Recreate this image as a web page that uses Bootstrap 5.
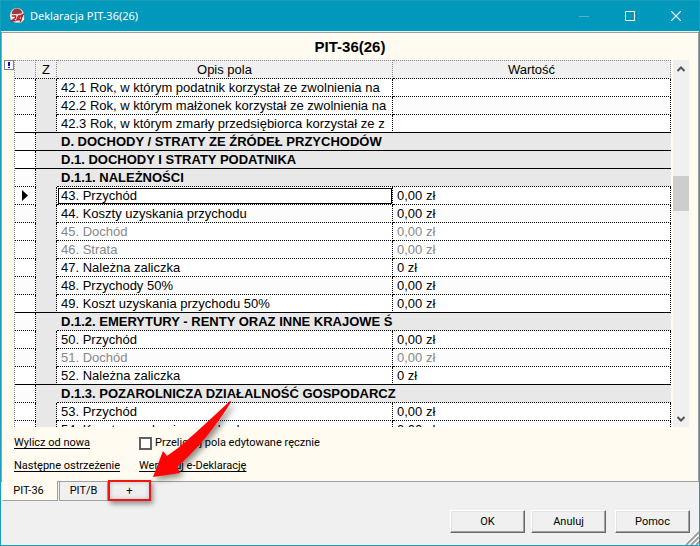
<!DOCTYPE html>
<html lang="pl">
<head>
<meta charset="utf-8">
<meta name="viewport" content="width=device-width, initial-scale=1">
<title>Deklaracja PIT-36(26)</title>
<link href="https://cdn.jsdelivr.net/npm/bootstrap@5.3.0/dist/css/bootstrap.min.css" rel="stylesheet">
<style>
  body { font: 11px/16px Roboto, "Noto Sans", sans-serif; color: #000; background: #f0f0f0; }
  .app-window { border: 1px solid #1a9ebe; }
  .titlebar { background: #0099bc; height: 30px; color: #fff; font: 11px/16px "Noto Sans", sans-serif; padding-left: 8px; }
  .titlebar button { width: 46px; height: 30px; border: 0; background: none; color: #fff; padding: 0; }
  .titlebar svg, .scroller svg { display: block; }
  .sheet { background: #fffbf0; border: 1px solid #a0a0a0; box-shadow: 0 -1px #e6f4f8; margin-top: 1px; padding: 0 9px 0 2px; }
  .sheet-title { font: bold 15px/27px "Liberation Sans", Arial, sans-serif; margin: 0; padding-left: 7px; }
  .warn { width: 10px; height: 10px; border: 1px solid #808080; background: #fff; padding: 0; }
  .warn svg { display: block; }
  .grid-view { overflow: hidden; flex: 1 1 0; margin-right: 2px; }
  .fields { width: 100%; table-layout: fixed; border-collapse: separate; border-spacing: 0; border-left: 1px dotted #888; font: 13px/17px "Liberation Sans", Arial, sans-serif; }
  .fields th, .fields td { height: 18px; padding: 0 0 0 4px; border: 0 dotted #000; border-width: 0 1px 1px 0; white-space: nowrap; overflow: hidden; background: #fff; }
  .fields thead th { height: 19px; font-weight: normal; text-align: center; background: #f0f0f0; border-top: 1px dotted #888; border-right-color: #888; padding: 0; }
  .fields tbody tr:nth-child(even) td { background: #fcfcfc; }
  .fields tbody tr td.flag { background: #e8e8e8; border-bottom: 0; }
  .fields tbody tr.section td.flag { border-right: 0; }
  .fields tbody tr.section td.heading { background: #e8e8e8; font-weight: bold; border-right: 0; }
  .fields tbody tr.solid td:not(.flag), .fields tbody tr.solid td.ruled { border-bottom: 1px solid #000; }
  .fields tr.off td { color: #888; }
  .fields td.current { outline: 1px solid #000; outline-offset: -2px; }
  .fields td.mark-cell { padding: 0 0 0 7px; }
  .mark-cell svg { display: block; }
  .col-mark, .col-flag { width: 21px; }
  .col-desc { width: 336px; }
  .scroller { width: 16px; background: #f0f0f0; }
  .scroller button { border: 0; background: none; padding: 0; width: 16px; height: 17px; }
  .thumb { background: #cdcdcd; height: 35px; }
  .space-above { flex: 1 1 0; }
  .space-below { flex: 2 1 0; }
  .links { padding: 8px 10px 7px; gap: 7px 0; }
  .links a { color: #000; text-decoration: underline; text-underline-offset: 2px; }
  .links .left { width: 125px; }
  .links .form-check-input { width: 13px; height: 13px; margin: 0 3px 0 0; border: 2px solid #606060; border-radius: 0; }
  .tabs { padding-left: 1px; margin-top: -1px; }
  .tabs button { border: 1px solid #a0a0a0; border-top: 0; height: 19px; background: #f0f0f0; padding: 0; width: 49px; margin-top: 1px; }
  .tabs .active { width: 56px; height: 20px; background: #fffbf0; margin: 0 1px 0 0; padding-right: 3px; border-color: #fff #a0a0a0 #a0a0a0 #fff; }
  .tabs .add { width: 43px; height: 21px; margin-top: -1px; border: 2px solid #f01414; box-shadow: 2px 3px 5px #0006, inset 0 0 5px #0003; font: 12px/16px "Noto Sans", sans-serif; }
  .actions { padding: 9px 9px 12px; gap: 6px; }
  .actions button { width: 75px; height: 23px; padding: 0; background: #f0f0f0; border: 1px solid; border-color: #fff #696969 #696969 #fff; box-shadow: inset -1px -1px #a0a0a0, inset 1px 1px #e3e3e3; }
  .actions .help { margin-left: 3px; }
  .grip { position: absolute; right: 0; bottom: 0; }
  .pointer { position: absolute; left: 151px; bottom: 61px; pointer-events: none; overflow: visible; filter: drop-shadow(3px 3px 3px #0007); }
</style>
</head>
<body>
<main class="app-window vh-100 d-flex flex-column position-relative overflow-hidden">
  <header class="titlebar d-flex align-items-center">
    <svg width="17" height="18" viewBox="0 0 18 18" aria-hidden="true"><circle cx="8.500" cy="8" r="7.500" fill="#d9e0e2"/><path d="M3 7a5.500 5.500 0 0 1 11-1L9 7Z" fill="#a3383c"/><path d="M1 8h15v5l-3 3H6l-4-3Z" fill="#f4eeee"/><path d="M3 9h4v2l-4 3h4M8 14l2-5h2l-2 4h2M16 7l-4 2h3M14 9l-2 6" fill="none" stroke="#b51f27" stroke-width="1.500"/></svg>
    <span class="flex-grow-1 ms-1">Deklaracja PIT-36(26)</span>
    <button type="button" aria-label="Minimalizuj" disabled><svg class="mx-auto" width="10" height="10"><path d="M0 5.500h10" stroke="#4cb7d0"/></svg></button>
    <button type="button" aria-label="Maksymalizuj"><svg class="mx-auto" width="10" height="10"><path d="M.5.500h9v9h-9z" fill="none" stroke="#fff"/></svg></button>
    <button type="button" aria-label="Zamknij"><svg class="mx-auto" width="10" height="10"><path d="m0 0 10 10M10 0 0 10" stroke="#fff" stroke-width="1.200"/></svg></button>
  </header>

  <section class="sheet d-flex flex-column flex-grow-1">
    <h1 class="sheet-title text-center">PIT-36(26)</h1>
    <div class="d-flex flex-grow-1">
      <button type="button" class="warn" aria-label="Ostrzeżenie"><svg width="8" height="8"><path d="M4 1v4M4 6v1" stroke="#00f" stroke-width="2"/></svg></button>
      <div class="d-flex flex-column flex-grow-1"><div class="grid-view">
        <table class="fields">
          <colgroup><col class="col-mark"><col class="col-flag"><col class="col-desc"><col></colgroup>
          <thead><tr><th></th><th>Z</th><th>Opis pola</th><th>Wartość</th></tr></thead>
          <tbody>
            <tr><td></td><td class="flag"></td><td>42.1 Rok, w którym podatnik korzystał ze zwolnienia na</td><td></td></tr>
            <tr><td></td><td class="flag"></td><td>42.2 Rok, w którym małżonek korzystał ze zwolnienia na</td><td></td></tr>
            <tr class="solid"><td></td><td class="flag ruled"></td><td>42.3 Rok, w którym zmarły przedsiębiorca korzystał ze z</td><td></td></tr>
            <tr class="section solid"><td></td><td class="flag ruled"></td><td class="heading" colspan="2">D. DOCHODY / STRATY ZE ŹRÓDEŁ PRZYCHODÓW</td></tr>
            <tr class="section solid"><td></td><td class="flag ruled"></td><td class="heading" colspan="2">D.1. DOCHODY I STRATY PODATNIKA</td></tr>
            <tr class="section"><td></td><td class="flag"></td><td class="heading" colspan="2">D.1.1. NALEŻNOŚCI</td></tr>
            <tr><td class="mark-cell"><svg width="7" height="11"><path d="M0 0 6 5.500 0 11Z"/></svg></td><td class="flag"></td><td class="current">43. Przychód</td><td>0,00 zł</td></tr>
            <tr><td></td><td class="flag"></td><td>44. Koszty uzyskania przychodu</td><td>0,00 zł</td></tr>
            <tr class="off"><td></td><td class="flag"></td><td>45. Dochód</td><td>0,00 zł</td></tr>
            <tr class="off"><td></td><td class="flag"></td><td>46. Strata</td><td>0,00 zł</td></tr>
            <tr><td></td><td class="flag"></td><td>47. Należna zaliczka</td><td>0 zł</td></tr>
            <tr><td></td><td class="flag"></td><td>48. Przychody 50%</td><td>0,00 zł</td></tr>
            <tr class="solid"><td></td><td class="flag ruled"></td><td>49. Koszt uzyskania przychodu 50%</td><td>0,00 zł</td></tr>
            <tr class="section"><td></td><td class="flag"></td><td class="heading" colspan="2">D.1.2. EMERYTURY - RENTY ORAZ INNE KRAJOWE Ś</td></tr>
            <tr><td></td><td class="flag"></td><td>50. Przychód</td><td>0,00 zł</td></tr>
            <tr class="off"><td></td><td class="flag"></td><td>51. Dochód</td><td>0,00 zł</td></tr>
            <tr class="solid"><td></td><td class="flag ruled"></td><td>52. Należna zaliczka</td><td>0 zł</td></tr>
            <tr class="section"><td></td><td class="flag"></td><td class="heading" colspan="2">D.1.3. POZAROLNICZA DZIAŁALNOŚĆ GOSPODARCZ</td></tr>
            <tr><td></td><td class="flag"></td><td>53. Przychód</td><td>0,00 zł</td></tr>
            <tr><td></td><td class="flag"></td><td>54. Koszty uzyskania przychodu</td><td>0,00 zł</td></tr>
          </tbody>
        </table>
      </div></div>
      <div class="scroller d-flex flex-column">
        <button type="button" aria-label="W górę"><svg class="mx-auto" width="8" height="6"><path d="m.5 5 3.500-3.500L7.500 5" fill="none" stroke="#555" stroke-width="2"/></svg></button>
        <div class="space-above"></div><div class="thumb"></div><div class="space-below"></div>
        <button type="button" aria-label="W dół"><svg class="mx-auto" width="8" height="6"><path d="m.5 1 3.500 3.500L7.500 1" fill="none" stroke="#555" stroke-width="2"/></svg></button>
      </div>
    </div>
    <div class="links d-flex flex-column">
      <div class="d-flex"><span class="left"><a href="#">Wylicz od nowa</a></span>
        <div class="d-flex align-items-center"><input class="form-check-input" type="checkbox" id="recalc"><label for="recalc">Przeliczaj pola edytowane ręcznie</label></div></div>
      <div class="d-flex"><span class="left"><a href="#">Następne ostrzeżenie</a></span><a href="#">Weryfikuj e-Deklarację</a></div>
    </div>
  </section>

  <nav class="tabs d-flex align-items-start" aria-label="Formularze">
    <button type="button" class="active">PIT-36</button><button type="button">PIT/B</button><button type="button" class="add">+</button>
  </nav>
  <footer class="actions d-flex justify-content-end">
    <button type="button">OK</button><button type="button">Anuluj</button><button type="button" class="help">Pomoc</button>
  </footer>
  <svg class="grip" width="14" height="14" aria-hidden="true"><path d="M1 14 14 1M6 14l8-8M11 14l3-3" stroke="#a0a0a0" stroke-width="2"/><path d="M0 13 13 0M5 13l9-9M10 13l4-4" stroke="#fff"/></svg>
  <svg class="pointer" width="80" height="80" aria-hidden="true"><path d="M1 73 11 47 15 52C32 41 55 18 78-3L79-2C65 21 44 47 25 63L28 69Z" fill="#fe0505"/></svg>
</main>
<script src="https://cdn.jsdelivr.net/npm/bootstrap@5.3.0/dist/js/bootstrap.bundle.min.js"></script>
</body>
</html>
